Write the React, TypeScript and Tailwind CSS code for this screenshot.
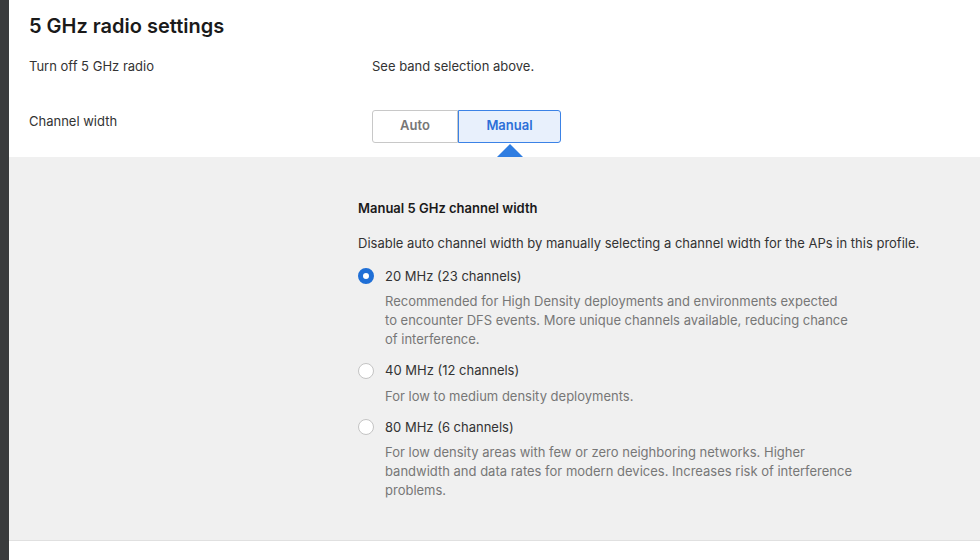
export default function App() {
  const opts = [
    { l: "20 MHz (23 channels)", d: ["Recommended for High Density deployments and environments expected", "to encounter DFS events. More unique channels available, reducing chance", "of interference."], on: true },
    { l: "40 MHz (12 channels)", d: ["For low to medium density deployments."], on: false },
    { l: "80 MHz (6 channels)", d: ["For low density areas with few or zero neighboring networks. Higher", "bandwidth and data rates for modern devices. Increases risk of interference", "problems."], on: false },
  ];
  return (
    <div className="flex h-[560px] w-[980px] overflow-hidden bg-white" style={{ fontFamily: "Inter, 'Noto Sans', sans-serif" }}>
      <div className="w-[9px] shrink-0 bg-[#3a3b3d]" />
      <div className="flex flex-1 flex-col">
        <div className="px-[20px] pt-[13px]">
          <h1 className="text-[20px] font-semibold leading-[26px] text-[#1a1a1a]">5 GHz radio settings</h1>
          <div className="mt-[18px] flex text-[13px] text-[#333]">
            <div className="w-[343px]">Turn off 5 GHz radio</div>
            <div>See band selection above.</div>
          </div>
          <div className="mt-[33px] flex text-[13px] text-[#333]">
            <div className="w-[343px] pt-[2px]">Channel width</div>
            <div className="relative flex h-[33px] text-[13px] font-semibold">
              <div className="flex w-[86px] items-center justify-center rounded-l-[3px] border border-[#c8c8c8] text-[#777]">Auto</div>
              <div className="relative flex w-[103px] items-center justify-center rounded-r-[3px] border border-[#3b82e6] bg-[#e8f0fc] text-[#2d6fd8]">
                Manual
                <div className="absolute left-1/2 top-[33px] h-0 w-0 -translate-x-1/2 border-x-[13px] border-b-[13px] border-x-transparent border-b-[#2f7de1]" />
              </div>
            </div>
          </div>
        </div>
        <div className="mt-[14px] flex-1 bg-[#f0f0f0] pl-[349px] pt-[42px] text-[13px]">
          <div className="font-semibold text-[#1a1a1a]">Manual 5 GHz channel width</div>
          <div className="mt-[16px] text-[#333]">Disable auto channel width by manually selecting a channel width for the APs in this profile.</div>
          <div className="mt-[13px] flex flex-col gap-[12px]">
            {opts.map((o) => (
              <div key={o.l}>
                <div className="flex items-center gap-[11px] text-[#333]">
                  {o.on ? (
                    <div className="h-[16px] w-[16px] rounded-full border-[5px] border-[#1f6fd6] bg-white" />
                  ) : (
                    <div className="h-[16px] w-[16px] rounded-full border border-[#c4c4c4] bg-white" />
                  )}
                  <span>{o.l}</span>
                </div>
                <div className="mt-[6px] pl-[27px] leading-[19px] text-[#777]">
                  {o.d.map((x) => <div key={x}>{x}</div>)}
                </div>
              </div>
            ))}
          </div>
        </div>
        <div className="h-[20px] shrink-0 border-t border-[#e0e0e0] bg-white" />
      </div>
    </div>
  );
}
